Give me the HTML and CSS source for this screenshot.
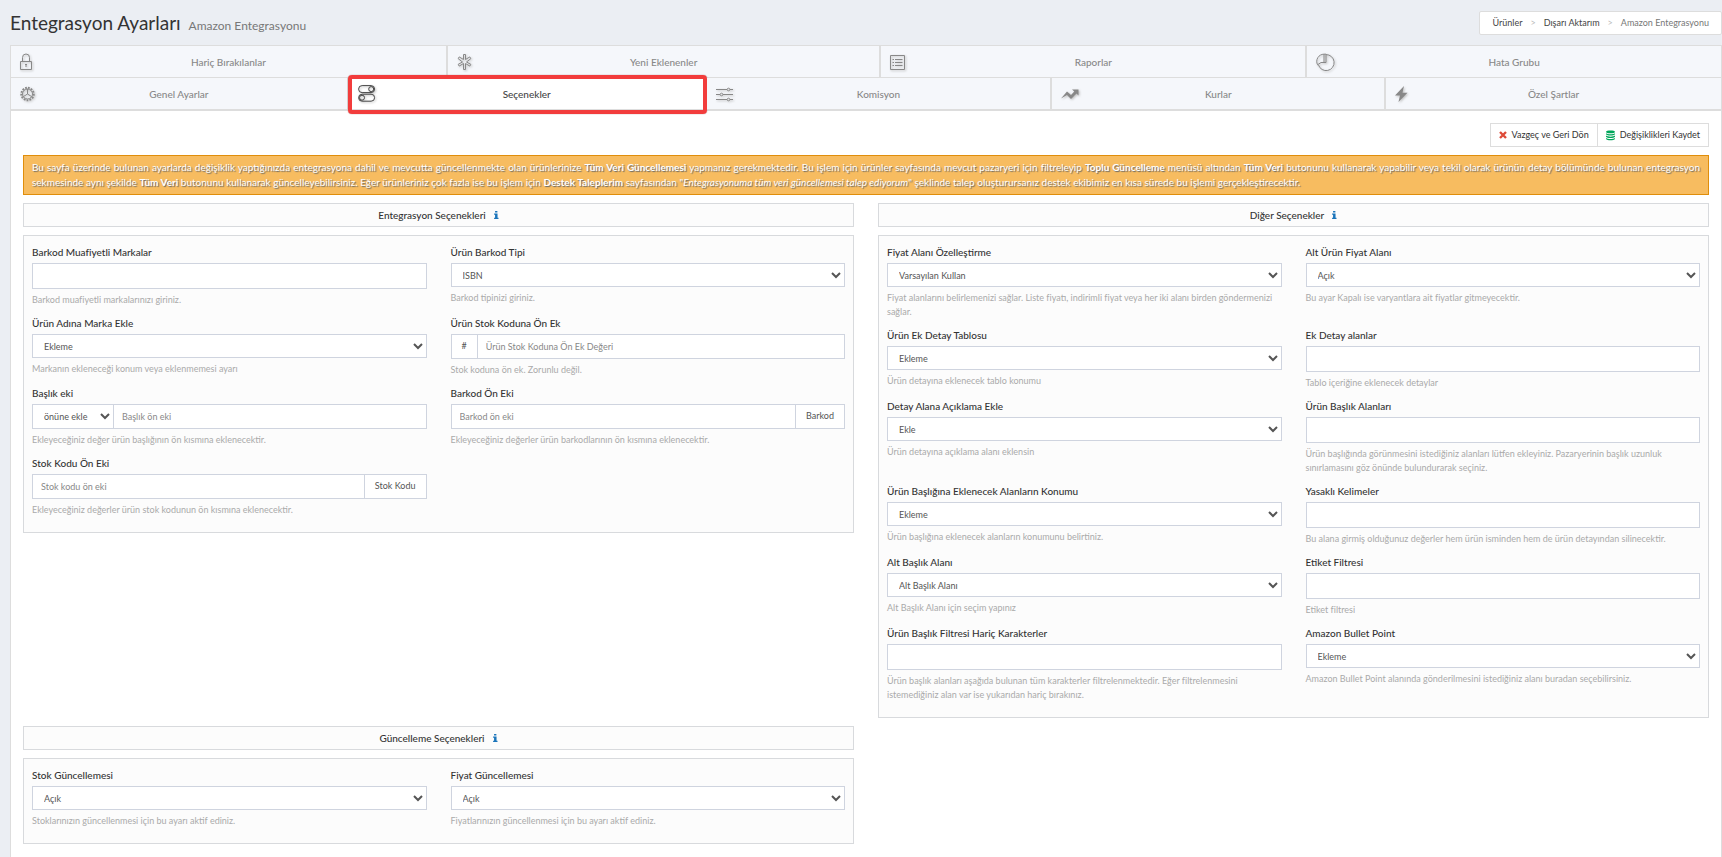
FILE: index.html
```
<!DOCTYPE html>
<html lang="tr">
<head>
<meta charset="utf-8">
<title>Entegrasyon Ayarları</title>
<link rel="stylesheet" href="styles.css">
</head>
<body>
<svg class="sprite" aria-hidden="true">
  <symbol id="info" viewBox="0 0 6 10"><path d="M1.2 0h2.9v2H1.2zM0 3.2h4.3v5.3h1.2V10H0V8.500h1.200V4.700H0z" fill="currentColor"/></symbol>
</svg>
<header class="page-head">
  <h1 class="page-title">Entegrasyon Ayarları <small class="page-sub">Amazon Entegrasyonu</small></h1>
  <nav class="breadcrumb" aria-label="Konum">
    <a href="#">Ürünler</a><span class="sep">&gt;</span><a href="#">Dışarı Aktarım</a><span class="sep">&gt;</span><span class="current">Amazon Entegrasyonu</span>
  </nav>
</header>
<main class="box">
  <nav class="tabs">
    <div class="tab-row row-four">
      <a class="tab" href="#"><svg class="icon" viewBox="0 0 18 18"><path d="M.5 8.500h11v8H.5zM2.500 8.500V4.500a3.500 3.500 0 0 1 7 0v4M6 11v3M5 11.500h2"/></svg><span>Hariç Bırakılanlar</span></a>
      <a class="tab" href="#"><svg class="icon" viewBox="0 0 18 18"><path d="M6.500 1.500h2v5l4.300-2.600 1 1.800L9.500 9l4.300 2.300-1 1.800-4.300-2.600v6h-2v-6l-4.300 2.600-1-1.800L5.500 9 1.200 5.700l1-1.800 4.300 2.600z"/></svg><span>Yeni Eklenenler</span></a>
      <a class="tab" href="#"><svg class="icon" viewBox="0 0 18 18"><path d="M.5 2.500h14v14H.5zM5 6.500h7.500M5 9.500h7.500M5 12.500h7.500M2.500 6.500H4M2.500 9.500H4M2.500 12.500H4"/></svg><span>Raporlar</span></a>
      <a class="tab" href="#"><svg class="icon" viewBox="0 0 18 18"><path d="M10 1.600A8 8 0 1 1 2.500 12"/><path d="M8 1.200v8.300H5L1.600 11.800A7.200 7.200 0 0 1 8 1.200h2v8.300H7"/></svg><span>Hata Grubu</span></a>
    </div>
    <div class="tab-row row-five">
      <a class="tab" href="#"><svg class="icon" viewBox="0 0 18 18"><circle cx="7.500" cy="9" r="6.200" stroke-width="2" stroke-dasharray="1.700 1.200"/><circle cx="7.500" cy="9" r="5"/><path d="M7.500 4v5l4 2.500M7.500 9l-4 2.500"/></svg><span>Genel Ayarlar</span></a>
      <a class="tab active" href="#" aria-current="page"><svg class="icon" viewBox="0 0 18 18"><rect x=".6" y=".6" width="16" height="7" rx="3.500"/><circle cx="13.200" cy="4.100" r="2.500"/><rect x=".6" y="9.200" width="16" height="7" rx="3.500"/><circle cx="4" cy="12.700" r="2.500"/></svg><span>Seçenekler</span></a>
      <a class="tab" href="#"><svg class="icon" viewBox="0 0 18 18"><path d="M0 4.500h11M14 4.500h3M0 9.500h4M7 9.500h10M0 14.500h11M14 14.500h3"/><circle cx="12.500" cy="4.500" r="1.300"/><circle cx="5.500" cy="9.500" r="1.300"/><circle cx="12.500" cy="14.500" r="1.300"/></svg><span>Komisyon</span></a>
      <a class="tab" href="#"><svg class="icon" viewBox="0 0 18 18"><path class="solid" d="M0 13.500 6 6.500l4 3.500 3.300-3.500L11 4.500h6.500v6l-2-2-5.500 5.500-4-4z"/></svg><span>Kurlar</span></a>
      <a class="tab" href="#"><svg class="icon" viewBox="0 0 18 18"><path class="solid" d="M9 1 0 10.500h5L3.500 17 12.500 7.800h-5z"/></svg><span>Özel Şartlar</span></a>
    </div>
  </nav>

  <div class="content">
    <div class="actions">
      <button type="button" class="btn"><svg class="btn-icon cross" viewBox="0 0 8 8"><path d="M1 1l6 6M7 1L1 7" stroke="currentColor" stroke-width="2.400"/></svg>Vazgeç ve Geri Dön</button>
      <button type="submit" class="btn"><svg class="btn-icon db" viewBox="0 0 10 11"><path d="M0 1.500C0-.5 10-.5 10 1.500S0 3.500 0 1.500zM0 3c2 1.600 8 1.600 10 0v1.200c-1 1.800-9 1.800-10 0zM0 5.600c2 1.600 8 1.600 10 0v1.200c-1 1.800-9 1.800-10 0zM0 8.200c2 1.600 8 1.600 10 0v1.200c-1 1.800-9 1.800-10 0z" fill="currentColor"/></svg>Değişiklikleri Kaydet</button>
    </div>
    <p class="alert">Bu sayfa üzerinde bulunan ayarlarda değişiklik yaptığınızda entegrasyona dahil ve mevcutta güncellenmekte olan ürünlerinize <b>Tüm Veri Güncellemesi</b> yapmanız gerekmektedir. Bu işlem için ürünler sayfasında mevcut pazaryeri için filtreleyip <b>Toplu Güncelleme</b> menüsü altından <b>Tüm Veri</b> butonunu kullanarak yapabilir veya tekil olarak ürünün detay bölümünde bulunan entegrasyon sekmesinde aynı şekilde <b>Tüm Veri</b> butonunu kullanarak güncelleyebilirsiniz. Eğer ürünleriniz çok fazla ise bu işlem için <b>Destek Taleplerim</b> sayfasından "<i>Entegrasyonuma tüm veri güncellemesi talep ediyorum</i>" şeklinde talep oluşturursanız destek ekibimiz en kısa sürede bu işlemi gerçekleştirecektir.</p>

    <form class="sections">
      <section class="section">
        <h2 class="section-title">Entegrasyon Seçenekleri <svg class="info"><use href="#info"/></svg></h2>
        <div class="panel">
          <div class="field"><label for="f1">Barkod Muafiyetli Markalar</label><input id="f1" class="control" type="text"><p class="help">Barkod muafiyetli markalarınızı giriniz.</p></div>
          <div class="field"><label for="f2">Ürün Barkod Tipi</label><select id="f2" class="control"><option>ISBN</option></select><p class="help">Barkod tipinizi giriniz.</p></div>
          <div class="field"><label for="f3">Ürün Adına Marka Ekle</label><select id="f3" class="control"><option>Ekleme</option></select><p class="help">Markanın ekleneceği konum veya eklenmemesi ayarı</p></div>
          <div class="field"><label for="f4">Ürün Stok Koduna Ön Ek</label><div class="group"><span class="addon hash">#</span><input id="f4" class="control" type="text" placeholder="Ürün Stok Koduna Ön Ek Değeri"></div><p class="help">Stok koduna ön ek. Zorunlu değil.</p></div>
          <div class="field"><label for="f5">Başlık eki</label><div class="group"><select class="control place" aria-label="Ek konumu"><option>önüne ekle</option></select><input id="f5" class="control" type="text" placeholder="Başlık ön eki"></div><p class="help">Ekleyeceğiniz değer ürün başlığının ön kısmına eklenecektir.</p></div>
          <div class="field"><label for="f6">Barkod Ön Eki</label><div class="group"><input id="f6" class="control" type="text" placeholder="Barkod ön eki"><span class="addon">Barkod</span></div><p class="help">Ekleyeceğiniz değerler ürün barkodlarının ön kısmına eklenecektir.</p></div>
          <div class="field"><label for="f7">Stok Kodu Ön Eki</label><div class="group"><input id="f7" class="control" type="text" placeholder="Stok kodu ön eki"><span class="addon">Stok Kodu</span></div><p class="help">Ekleyeceğiniz değerler ürün stok kodunun ön kısmına eklenecektir.</p></div>
        </div>
      </section>

      <section class="section">
        <h2 class="section-title">Diğer Seçenekler <svg class="info"><use href="#info"/></svg></h2>
        <div class="panel">
          <div class="field"><label for="g1">Fiyat Alanı Özelleştirme</label><select id="g1" class="control"><option>Varsayılan Kullan</option></select><p class="help">Fiyat alanlarını belirlemenizi sağlar. Liste fiyatı, indirimli fiyat veya her iki alanı birden göndermenizi sağlar.</p></div>
          <div class="field"><label for="g2">Alt Ürün Fiyat Alanı</label><select id="g2" class="control"><option>Açık</option></select><p class="help">Bu ayar Kapalı ise varyantlara ait fiyatlar gitmeyecektir.</p></div>
          <div class="field"><label for="g3">Ürün Ek Detay Tablosu</label><select id="g3" class="control"><option>Ekleme</option></select><p class="help">Ürün detayına eklenecek tablo konumu</p></div>
          <div class="field"><label for="g4">Ek Detay alanlar</label><input id="g4" class="control" type="text"><p class="help">Tablo içeriğine eklenecek detaylar</p></div>
          <div class="field"><label for="g5">Detay Alana Açıklama Ekle</label><select id="g5" class="control"><option>Ekle</option></select><p class="help">Ürün detayına açıklama alanı eklensin</p></div>
          <div class="field"><label for="g6">Ürün Başlık Alanları</label><input id="g6" class="control" type="text"><p class="help">Ürün başlığında görünmesini istediğiniz alanları lütfen ekleyiniz. Pazaryerinin başlık uzunluk sınırlamasını göz önünde bulundurarak seçiniz.</p></div>
          <div class="field"><label for="g7">Ürün Başlığına Eklenecek Alanların Konumu</label><select id="g7" class="control"><option>Ekleme</option></select><p class="help">Ürün başlığına eklenecek alanların konumunu belirtiniz.</p></div>
          <div class="field"><label for="g8">Yasaklı Kelimeler</label><input id="g8" class="control" type="text"><p class="help">Bu alana girmiş olduğunuz değerler hem ürün isminden hem de ürün detayından silinecektir.</p></div>
          <div class="field"><label for="g9">Alt Başlık Alanı</label><select id="g9" class="control"><option>Alt Başlık Alanı</option></select><p class="help">Alt Başlık Alanı için seçim yapınız</p></div>
          <div class="field"><label for="g10">Etiket Filtresi</label><input id="g10" class="control" type="text"><p class="help">Etiket filtresi</p></div>
          <div class="field"><label for="g11">Ürün Başlık Filtresi Hariç Karakterler</label><input id="g11" class="control" type="text"><p class="help">Ürün başlık alanları aşağıda bulunan tüm karakterler filtrelenmektedir. Eğer filtrelenmesini istemediğiniz alan var ise yukarıdan hariç bırakınız.</p></div>
          <div class="field"><label for="g12">Amazon Bullet Point</label><select id="g12" class="control"><option>Ekleme</option></select><p class="help">Amazon Bullet Point alanında gönderilmesini istediğiniz alanı buradan seçebilirsiniz.</p></div>
        </div>
      </section>

      <section class="section">
        <h2 class="section-title">Güncelleme Seçenekleri <svg class="info"><use href="#info"/></svg></h2>
        <div class="panel">
          <div class="field"><label for="h1">Stok Güncellemesi</label><select id="h1" class="control"><option>Açık</option></select><p class="help">Stoklarınızın güncellenmesi için bu ayarı aktif ediniz.</p></div>
          <div class="field"><label for="h2">Fiyat Güncellemesi</label><select id="h2" class="control"><option>Açık</option></select><p class="help">Fiyatlarınızın güncellenmesi için bu ayarı aktif ediniz.</p></div>
        </div>
      </section>
    </form>
  </div>
</main>
</body>
</html>
```
FILE: styles.css
```
* { box-sizing: border-box; }
body {
  margin: 0;
  padding-left: 10px;
  min-height: 100vh;
  display: flex;
  flex-direction: column;
  background: #ebeef3;
  color: #333;
  font-family: Lato, "Liberation Sans", sans-serif;
  font-size: 10px;
  line-height: 14px;
}
a { color: inherit; text-decoration: none; }
.sprite { display: none; }

.page-head { display: flex; justify-content: space-between; align-items: center; padding: 11px 0 10px; }
.page-title { margin: 0; font-size: 19px; line-height: 24px; font-weight: 400; }
.page-sub { margin-left: 3px; font-size: 12px; line-height: 12px; color: #777; }
.breadcrumb {
  display: flex; gap: 8px; padding: 4px 12px;
  border: 1px solid #ddd; border-radius: 2px; background: #fff; color: #444; font-size: 9px;
}
.sep { color: #bbb; }
.current { color: #777; }

.box { flex: 1; background: #fff; border: 1px solid #ddd; border-bottom: 0; }
.tabs { border-bottom: 1px solid #ddd; }
.tab-row { display: grid; }
.row-four { grid-template-columns: 437fr 434fr 426fr 414fr; }
.row-five { grid-template-columns: 338fr 358fr 346fr 334fr 335fr; }
.tab {
  position: relative;
  display: grid; grid-template-columns: 1fr auto 1fr; align-items: center;
  height: 32px; padding: 0 9px;
  border-right: 2px solid #ddd; border-bottom: 1px solid #ddd;
  background: #f5f7fb; color: #888; font-weight: 500;
}
.tab:last-child { border-right: 0; }
.tab.active { background: #fff; color: #444; }
.tab.active::after {
  content: ""; position: absolute; inset: -3px -2px -5px -1px;
  border: 4px solid #f23c3c; border-radius: 4px; box-shadow: 0 0 1px #844;
}
.icon {
  width: 18px; height: 18px; overflow: visible;
  fill: none; stroke: currentColor; stroke-width: 1;
  filter: drop-shadow(1px 1px 1px #bbb);
}
.icon .solid { fill: currentColor; stroke: none; }

.content { padding: 12px; }
.actions { display: flex; justify-content: flex-end; margin-bottom: 8px; }
.btn {
  display: flex; align-items: center; gap: 5px;
  height: 24px; padding: 0 8px; margin-left: -1px;
  border: 1px solid #ddd; background: #fff; color: #333; font: inherit; font-size: 9px;
}
.cross { width: 8px; height: 8px; color: #dd4b39; }
.db { width: 9px; height: 11px; color: #00a65a; }
.alert {
  margin: 0 0 8px; padding: 4px 8px;
  border: 1px solid #e08e0b; background: #f7bc60; color: #fff;
  text-align: justify; line-height: 15px; text-shadow: 1px 1px 1px #666;
}

.sections { display: grid; grid-template-columns: 1fr 1fr; gap: 8px 24px; align-items: start; }
.section-title {
  display: flex; justify-content: center; align-items: center; gap: 8px;
  margin: 0 0 8px; height: 24px; border: 1px solid #d8dadd; background: #fcfcfc;
  font-size: 10px; font-weight: 500;
}
.info { width: 5px; height: 8px; color: #1b75bb; }
.panel {
  display: grid; grid-template-columns: 1fr 1fr; gap: 9px 24px;
  padding: 9px 8px 15px; border: 1px solid #d8dadd; background: #fcfcfc;
}
.field { min-width: 0; }
label { display: block; margin-bottom: 4px; font-weight: 500; }
.control {
  display: block; width: 100%; height: 26px; padding: 0 8px;
  border: 1px solid #cfd4df; border-radius: 0; background: #fff; color: #555;
  font: inherit; font-size: 9px;
}
select.control { height: 24px; padding: 0 0 0 7px; }
.control::placeholder { color: #888; }
.group { display: flex; }
.group .control { flex: 1; min-width: 0; height: 25px; }
.group .control + .control { margin-left: -1px; }
.group .place { flex: 0 0 82px; }
.addon { padding: 4px 10px; border: 1px solid #cfd4df; border-left: 0; background: #fff; color: #555; font-size: 9px; }
.hash { border-left: 1px solid #cfd4df; border-right: 0; }
.help { margin: 4px 0 0; color: #aaa; font-size: 9px; }
```
